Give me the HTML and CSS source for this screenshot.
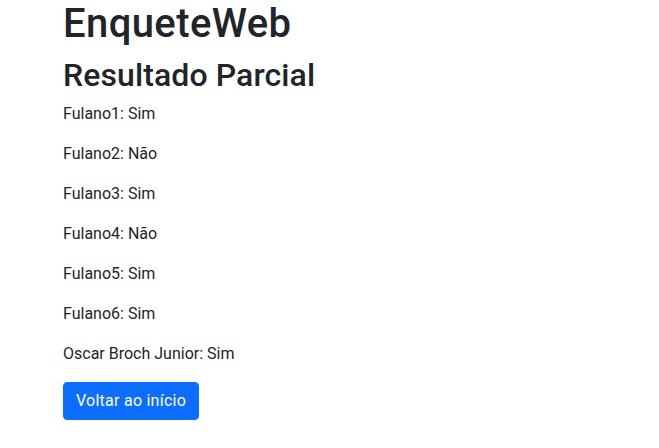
FILE: index.html
```html
<!DOCTYPE html>
<html lang="pt-BR">
<head>
<meta charset="utf-8">
<title>EnqueteWeb</title>
<link rel="stylesheet" href="styles.css">
</head>
<body>
<main class="page">
  <h1 class="title">EnqueteWeb</h1>
  <h2 class="subtitle">Resultado Parcial</h2>
  <p class="vote">Fulano1: Sim</p>
  <p class="vote">Fulano2: Não</p>
  <p class="vote">Fulano3: Sim</p>
  <p class="vote">Fulano4: Não</p>
  <p class="vote">Fulano5: Sim</p>
  <p class="vote">Fulano6: Sim</p>
  <p class="vote">Oscar Broch Junior: Sim</p>
  <a class="btn" href="#">Voltar ao início</a>
</main>
</body>
</html>
```
FILE: styles.css
```css
html, body {
  margin: 0;
  padding: 0;
  background: #fff;
}
body {
  font-family: Roboto, "Noto Sans", sans-serif;
  font-size: 16px;
  line-height: 1.5;
  color: #212529;
}
.page {
  padding: 0 63px;
}
.title {
  margin: 0 0 8px;
  font-size: 40px;
  font-weight: 500;
  line-height: 1.2;
  letter-spacing: 0.4px;
}
.subtitle {
  margin: 0 0 8px;
  font-size: 32px;
  font-weight: 500;
  line-height: 1.2;
  letter-spacing: 0.1px;
}
.vote {
  margin: 0 0 16px;
}
.btn {
  display: inline-block;
  padding: 6px 12px;
  border: 1px solid #0d6efd;
  border-radius: 4px;
  background: #0d6efd;
  color: #fff;
  text-decoration: none;
  line-height: 24px;
  letter-spacing: 0.25px;
}
```
